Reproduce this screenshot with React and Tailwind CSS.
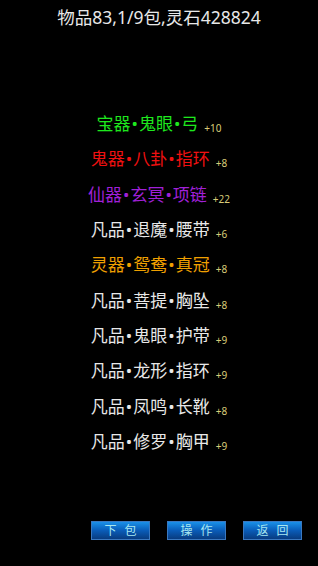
import React from 'react'

const items = [
  { name: '宝器•鬼眼•弓', plus: '+10', color: 'text-[#1ee81e]' },
  { name: '鬼器•八卦•指环', plus: '+8', color: 'text-[#f01010]' },
  { name: '仙器•玄冥•项链', plus: '+22', color: 'text-[#a020d8]' },
  { name: '凡品•退魔•腰带', plus: '+6', color: 'text-[#e8e8e8]' },
  { name: '灵器•鸳鸯•真冠', plus: '+8', color: 'text-[#f0a000]' },
  { name: '凡品•菩提•胸坠', plus: '+8', color: 'text-[#e8e8e8]' },
  { name: '凡品•鬼眼•护带', plus: '+9', color: 'text-[#e8e8e8]' },
  { name: '凡品•龙形•指环', plus: '+9', color: 'text-[#e8e8e8]' },
  { name: '凡品•凤鸣•长靴', plus: '+8', color: 'text-[#e8e8e8]' },
  { name: '凡品•修罗•胸甲', plus: '+9', color: 'text-[#e8e8e8]' },
]

const Btn = ({ label }) => (
  <div className="w-[59px] h-[19px] flex items-center justify-center border border-[#3a78c0] bg-gradient-to-b from-[#1a90e8] via-[#0a5cb8] to-[#083c80] text-[#a8e8f0] text-[12px] tracking-[8px] pl-[8px] leading-none">
    {label}
  </div>
)

// name parts separated by a narrow dot
const Name = ({ text }) => {
  const parts = text.split('•')
  return parts.map((p, i) => (
    <React.Fragment key={i}>
      {i > 0 && <span className="mx-[1px]">•</span>}
      {p}
    </React.Fragment>
  ))
}

export default function App() {
  return (
    <div
      className="w-[318px] h-[566px] bg-black flex flex-col items-center overflow-hidden"
      style={{ fontFamily: '"Noto Sans", "Noto Sans CJK SC", sans-serif' }}
    >
      <div className="pt-[5px] text-[17.5px] leading-[24px] text-[#e8e8e8]">物品83,1/9包,灵石428824</div>
      <div className="mt-[77px] flex flex-col items-center">
        {items.map((it) => (
          <div key={it.name} className="h-[35.3px] flex items-center justify-center">
            <span className={`${it.color} text-[17px] leading-none`}>
              <Name text={it.name} />
            </span>
            <span className="text-[#d8cc78] text-[10px] leading-none ml-[6px] mt-[9px]">{it.plus}</span>
          </div>
        ))}
      </div>
      <div className="mt-auto mb-[26px] w-full flex justify-end gap-[17px] pr-[16px]">
        <Btn label="下包" />
        <Btn label="操作" />
        <Btn label="返回" />
      </div>
    </div>
  )
}
